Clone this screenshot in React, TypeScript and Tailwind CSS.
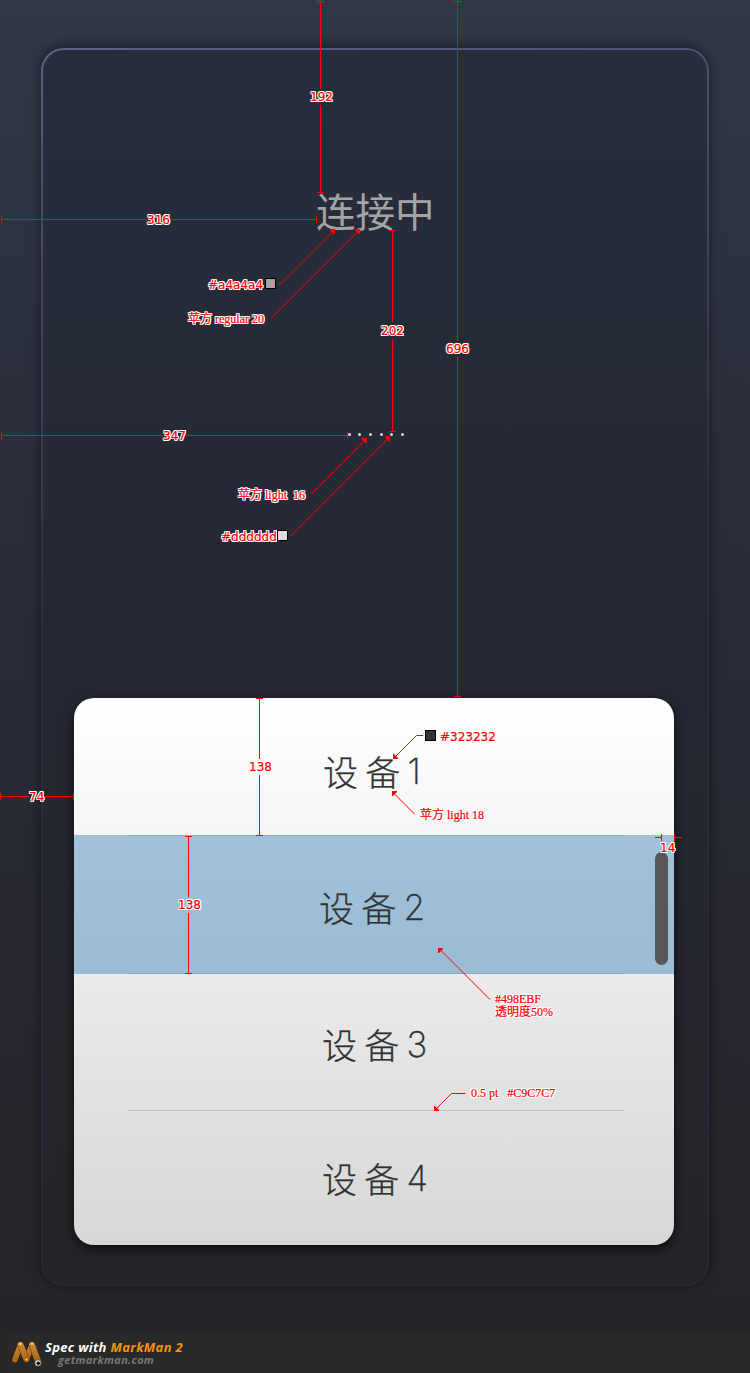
import type { ReactNode } from "react";

const HALO =
  "[-webkit-text-stroke:0.2px_#f00] [text-shadow:1px_0_#fff,-1px_0_#fff,0_1px_#fff,0_-1px_#fff,1px_1px_#fff,-1px_-1px_#fff,1px_-1px_#fff,-1px_1px_#fff]";

function Measure({ at, children }: { at: string; children: ReactNode }) {
  return (
    <span
      className={`absolute whitespace-pre font-['DejaVu_Sans',sans-serif] text-[12px] leading-[14px] text-[#f00] ${HALO} ${at}`}
    >
      {children}
    </span>
  );
}

function Note({ at, children }: { at: string; children: ReactNode }) {
  return (
    <span
      className={`absolute whitespace-pre font-['Liberation_Serif','Noto_Sans_CJK_SC',serif] text-[12px] leading-[13px] text-[#f00] ${HALO} ${at}`}
    >
      {children}
    </span>
  );
}

function Swatch({ at }: { at: string }) {
  return <span className={`absolute size-[11px] border border-black ${at}`} />;
}

function Guides() {
  return (
    <svg
      className="absolute inset-0"
      width="750"
      height="1373"
      viewBox="0 0 750 1373"
      fill="none"
      stroke="#f00"
      shapeRendering="crispEdges"
    >
      <path d="M317 1.5h7M320.5 1v88M320.5 105v88M317 192.5h7" />
      <path d="M454 1.5h7M457.5 1v340M457.5 357v340M454 696.5h7" />
      <path d="M1.5 216v7M1 219.5h146M171 219.5h146M316.5 216v7" />
      <path d="M389 230.5h7M392.5 230v92M392.5 339v93M389 431.5h7" />
      <path d="M1.5 432v7M1 435.5h162M186 435.5h162M347.5 432v7" />
      <path d="M256 698.5h7M259.5 698v61M259.5 775v61M256 835.5h7" />
      <path d="M185 836.5h7M188.5 836v61M188.5 913v61M185 973.5h7" />
      <path d="M0.5 793v7M0 796.5h29M45 796.5h29M73.5 793v7" />
      <path d="M655 837.5h7M661.5 834v7M674.5 834v7M674 837.5h8" />
      <path
        d="M278 283.5h3l54-54M271 318.500l89-89M311 494l56-56M290.500 536l99-99"
        shapeRendering="auto"
      />
      <path
        d="M423 735.500h-6.500l-23 23M414.500 814l-22-22M490 999.500l-51.500-51.500M465.500 1093.500h-14l-17 17"
        shapeRendering="auto"
      />
      <g fill="#f00" stroke="none" shapeRendering="auto">
        <path d="M330 229h5v5h-1.500l-3.500-3.500z" />
        <path d="M355 229h5v5h-1.500l-3.500-3.500z" />
        <path d="M362 438h5v5h-1.500l-3.500-3.500z" />
        <path d="M385 436h5v5h-1.500l-3.500-3.500z" />
        <path d="M393 754v5h5v-1l-4-4z" />
        <path d="M392 791h5v1l-4 4h-1z" />
        <path d="M438 948h5v1l-4 4h-1z" />
        <path d="M434 1106v5h5v-1l-4-4z" />
      </g>
    </svg>
  );
}

function Device({ n, className }: { n: number; className: string }) {
  return (
    <li
      className={`flex items-center font-['Noto_Sans_CJK_SC',sans-serif] text-[35px] font-light leading-none tracking-[7.300px] text-[#323232] [-webkit-text-stroke:0.25px_#323232] ${className}`}
    >
      <span className="-mt-[2px]">设备</span>
      <span className="mt-px font-['Inter',sans-serif] text-[35px] font-extralight tracking-normal [-webkit-text-stroke:0.4px_#323232]">
        {n}
      </span>
    </li>
  );
}

function Mascot() {
  return (
    <svg width="33" height="28" viewBox="0 0 32 28" fill="none" strokeLinecap="round" strokeLinejoin="round">
      <defs>
        <linearGradient id="body" x1="0" y1="0" x2="0" y2="28" gradientUnits="userSpaceOnUse">
          <stop stopColor="#dca046" />
          <stop offset="1" stopColor="#a4590f" />
        </linearGradient>
      </defs>
      <g strokeWidth="6.800" stroke="#3a1f08">
        <path d="M3.500 19.500L9 5" />
        <path d="M15 19L20.500 5" />
      </g>
      <g strokeWidth="5.600" stroke="url(#body)">
        <path d="M3.500 19.500L9 5" />
        <path d="M15 19L20.500 5" />
      </g>
      <g strokeWidth="6.800" stroke="#5a300b">
        <path d="M9 5L15 19" />
        <path d="M20.500 5L27 22.500" />
      </g>
      <g strokeWidth="5.800" stroke="url(#body)">
        <path d="M9 5L15 19" />
        <path d="M20.500 5L27 22.500" />
      </g>
      <path
        d="M3.500 19.500L9 5M9 5L15 19M15 19L20.500 5M20.500 5L27 22.500"
        stroke="#7d420f"
        strokeWidth="5"
        strokeDasharray="0.600 1.700"
        strokeLinecap="butt"
        strokeOpacity=".45"
      />
      <g fill="#ffe6a0">
        <circle cx="9" cy="4" r="1" />
        <circle cx="20.500" cy="4" r="1" />
        <circle cx="15" cy="19.500" r="1" />
      </g>
      <circle cx="26.500" cy="23" r="3.200" fill="#eee" stroke="#222" strokeWidth=".6" />
      <circle cx="26.800" cy="23.200" r="1.800" fill="#000" />
    </svg>
  );
}

export default function App() {
  return (
    <div className="relative flex h-[1373px] w-[750px] flex-col overflow-hidden bg-linear-to-b from-[#303747] via-[#292b37] via-50% to-[#252428]">
      <main className="mx-[41px] mt-[47.500px] flex h-[1238.500px] flex-col rounded-[23px] bg-[linear-gradient(170deg,#59628a_0%,#474c66_12%,#2a2d3b_45%,#262833_100%)] p-[2px] shadow-[0_-2px_12px_rgba(0,0,0,0.5)]">
        <div className="flex flex-1 flex-col rounded-[21px] bg-linear-to-b from-[#272d3d] via-[#252833] via-50% to-[#252428] px-[31px]">
          <h1 className="mt-[140.500px] pl-[242px] font-['Noto_Sans_CJK_SC',sans-serif] text-[39.500px] font-normal leading-[40px] text-[#a4a4a4]">
            连接中
          </h1>
          <div className="mt-[203px] flex gap-[7.700px] pl-[273.500px]">
            {[0, 1, 2, 3, 4, 5].map((i) => (
              <span key={i} className="size-[3px] rounded-full bg-[#dddddd]" />
            ))}
          </div>
          <ul className="relative mt-[262px] flex h-[547px] w-[600px] flex-col rounded-[20px] bg-linear-to-b from-white to-[#d7d7d7] shadow-[0_4px_10px_1px_rgba(0,0,0,0.6)]">
            <Device n={1} className="h-[137px] pl-[249px] pt-[9px]" />
            <Device n={2} className="h-[139px] bg-[#498ebf]/50 pl-[245px] pt-[5px]" />
            <Device n={3} className="h-[136px] pl-[248px] pt-[4px]" />
            <Device n={4} className="h-[135px] pl-[248px] pt-px" />
            <li className="absolute left-[54px] top-[137px] h-px w-[496px] bg-[#8db1c9]" />
            <li className="absolute left-[54px] top-[275px] h-px w-[496px] bg-[#87a9c0]" />
            <li className="absolute left-[54px] top-[412px] h-px w-[496px] bg-[#c5c4c4]" />
            <li className="absolute right-[6px] top-[154px] h-[113px] w-[13.500px] rounded-full bg-[#575757]" />
          </ul>
        </div>
      </main>

      <footer className="mt-auto ml-px flex h-[39px] items-start bg-[#282828] font-['Open_Sans',sans-serif] font-bold italic">
        <div className="ml-[10px] mt-[6px]">
          <Mascot />
        </div>
        <div className="ml-px mt-[7px] flex flex-col whitespace-nowrap">
          <span className="text-[13px] leading-[13px] tracking-[0.330px] text-white">
            Spec with <span className="text-[#f7930c]">MarkMan 2</span>
          </span>
          <span className="ml-[13px] text-[11px] leading-[12px] tracking-[0.300px] text-[#777]">getmarkman.com</span>
        </div>
      </footer>

      <Guides />

      <Measure at="left-[310px] top-[90px]">192</Measure>
      <Measure at="left-[147px] top-[213px]">316</Measure>
      <Measure at="left-[381px] top-[324px]">202</Measure>
      <Measure at="left-[446px] top-[342px]">696</Measure>
      <Measure at="left-[163px] top-[429px]">347</Measure>
      <Measure at="left-[249px] top-[760px]">138</Measure>
      <Measure at="left-[178px] top-[898px]">138</Measure>
      <Measure at="left-[29px] top-[790px]">74</Measure>
      <Measure at="left-[660px] top-[841px]">14</Measure>
      <Measure at="left-[208px] top-[278px]">#a4a4a4</Measure>
      <Measure at="left-[221px] top-[530px]">#dddddd</Measure>
      <Measure at="left-[440px] top-[730px]">#323232</Measure>

      <Note at="left-[188px] top-[313px]">苹方 regular 20</Note>
      <Note at="left-[238px] top-[489px]">{"苹方 light  16"}</Note>
      <Note at="left-[420px] top-[809px]">苹方 light 18</Note>
      <Note at="left-[495px] top-[993px]">{"#498EBF\n透明度50%"}</Note>
      <Note at="left-[471px] top-[1087px]">{"0.5 pt   #C9C7C7"}</Note>

      <Swatch at="left-[265px] top-[278px] bg-[#a4a4a4]" />
      <Swatch at="left-[277px] top-[530px] bg-[#dddddd]" />
      <Swatch at="left-[425px] top-[730px] bg-[#323232]" />
    </div>
  );
}
